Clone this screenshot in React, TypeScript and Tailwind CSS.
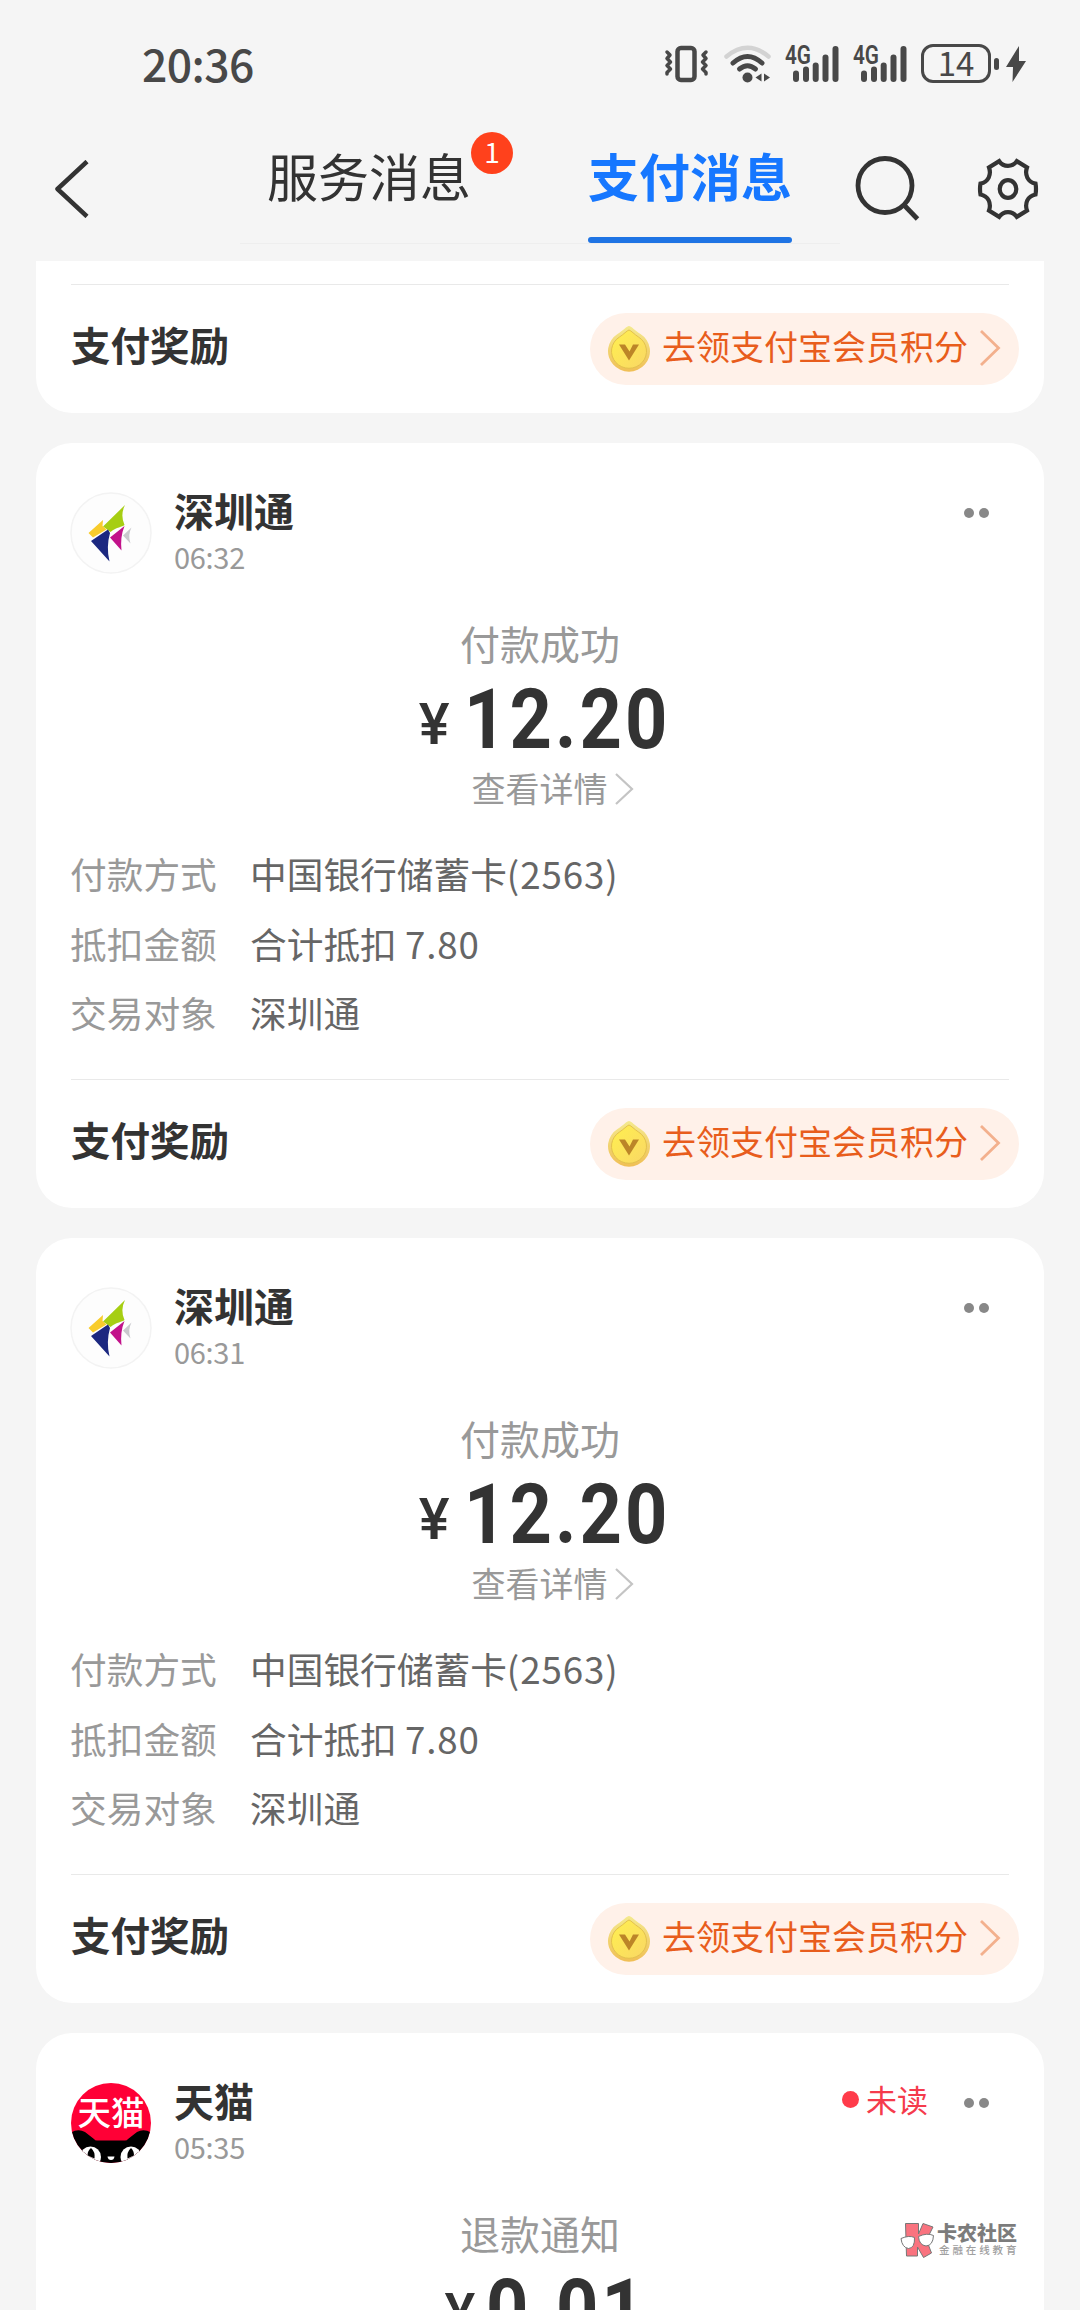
import type { ReactNode } from 'react'

type Row = { label: string; value: string }

type Message = {
  id: number
  name: string
  time: string
  title: string
  amount: string
  unread?: boolean
  avatar: ReactNode
  rows: Row[]
}

const payRows: Row[] = [
  { label: '付款方式', value: '中国银行储蓄卡(2563)' },
  { label: '抵扣金额', value: '合计抵扣 7.80' },
  { label: '交易对象', value: '深圳通' },
]

const messages: Message[] = [
  { id: 1, name: '深圳通', time: '06:32', title: '付款成功', amount: '12.20', avatar: <MetroAvatar />, rows: payRows },
  { id: 2, name: '深圳通', time: '06:31', title: '付款成功', amount: '12.20', avatar: <MetroAvatar />, rows: payRows },
  { id: 3, name: '天猫', time: '05:35', title: '退款通知', amount: '0.01', unread: true, avatar: <TmallAvatar />, rows: payRows },
]

function MetroAvatar() {
  return (
    <svg className="block h-[82px] w-[82px]" viewBox="0 0 82 82">
      <circle cx="41" cy="41" r="40" fill="#fdfdfd" stroke="#f3f3f3" strokeWidth="1.5" />
      <path d="M55 13 L33 34.500 L40.500 40 C47 35 52 35 54.500 33 Q50 23 55 13Z" fill="#a6ce12" />
      <path d="M33 28 L18.500 41 L23 45.500 L36.500 37.500 L32.500 34Z" fill="#f8cc2c" />
      <path d="M38 37.500 L21 49 L39.500 69.500 Q36 55 40 41Z" fill="#1c2880" />
      <path d="M54.500 34 L40 45.500 L51.500 58.500 Q50 45 54.500 34Z" fill="#c2128a" />
      <path d="M61.500 35.500 L53 43.500 L60.500 51.500 Q57.500 43 61.500 35.500Z" fill="#c9c9cd" />
    </svg>
  )
}

function TmallAvatar() {
  return (
    <svg className="block h-[82px] w-[82px]" viewBox="0 0 82 82">
      <clipPath id="tmall">
        <circle cx="41" cy="41" r="40" />
      </clipPath>
      <g clipPath="url(#tmall)">
        <rect width="82" height="82" fill="#ff0036" />
        <path d="M0 82 V51 Q8 46 15 50 L24 57 Q25 58.500 27 58.500 H55 Q57 58.500 58 57 L67 50 Q74 46 82 51 V82Z" fill="#000" />
        <ellipse cx="20.500" cy="75" rx="10.500" ry="10.500" fill="#fff" />
        <ellipse cx="61" cy="75" rx="10.500" ry="10.500" fill="#fff" />
        <path d="M21 66 Q25.500 70 24.500 76.500 L17.500 73.500 Q17.500 68.500 21 66Z" fill="#000" />
        <path d="M61 66 Q56.500 70 57.500 76.500 L64 73.500 Q64 68.500 61 66Z" fill="#000" />
        <path d="M37.500 74.500 H44.500 Q44 78 41 78 Q38 78 37.500 74.500Z" fill="#fff" />
      </g>
      <text x="41" y="43" textAnchor="middle" fontSize="33.500" fontWeight="500" fill="#fff" fontFamily="'Noto Sans CJK SC', sans-serif">
        天猫
      </text>
    </svg>
  )
}

function Signal() {
  return (
    <svg className="block h-[38px] w-[54px] overflow-visible" viewBox="0 0 54 38" fill="#484848">
      <text x="0" y="19" fontSize="25" fontWeight="600" textLength="26" lengthAdjust="spacingAndGlyphs" fontFamily="Roboto, sans-serif">
        4G
      </text>
      <rect x="8" y="25.500" width="6" height="11.500" rx="3" />
      <rect x="18" y="21.500" width="6" height="15.500" rx="3" />
      <rect x="27.700" y="17.500" width="6" height="19.500" rx="3" />
      <rect x="37.500" y="9.500" width="6" height="27.500" rx="3" />
      <rect x="47.500" y="1" width="6" height="36" rx="3" />
    </svg>
  )
}

function StatusBar() {
  return (
    <div className="flex h-[128px] items-start justify-between pl-[142px] pr-[54px] text-[#484848]">
      <span className="mt-[40px] text-[44.500px] leading-[45px] font-medium tracking-[-0.600px]">20:36</span>
      <div className="mt-[45px] flex items-start">
        <svg className="mr-[14px] block h-[38px] w-[46px]" viewBox="0 0 46 38" fill="none" stroke="#484848">
          <rect x="13.500" y="3" width="17" height="32" rx="3.500" strokeWidth="4.500" />
          <path d="M3 7 L6 10 L3 13.500 L6.500 17 L3 20.500 L6.500 24 L3 27.500 L3 29" strokeWidth="3.500" strokeLinejoin="round" strokeLinecap="round" />
          <path d="M42 7 L39 10 L42 13.500 L38.500 17 L42 20.500 L38.500 24 L42 27.500 L42 29" strokeWidth="3.500" strokeLinejoin="round" strokeLinecap="round" />
        </svg>
        <svg className="mr-[14px] block h-[38px] w-[47px]" viewBox="0 0 47 38" fill="none" strokeLinecap="round">
          <path d="M2.500 11.500 Q23.500 -6 44.500 11.500" stroke="#d3d3d3" strokeWidth="4.500" />
          <path d="M9 18 Q23.500 5 38 18" stroke="#484848" strokeWidth="5" />
          <path d="M15.500 24 Q23.500 17.500 31.500 24" stroke="#484848" strokeWidth="5" />
          <circle cx="23.500" cy="32.500" r="5" fill="#484848" />
          <path d="M37.500 28.500 V36.500 L31.500 32.500Z M40 28.500 V36.500 L46 32.500Z" fill="#484848" />
        </svg>
        <div className="mr-[14px]">
          <Signal />
        </div>
        <div className="mr-[14px]">
          <Signal />
        </div>
        <div className="-mt-px mr-[3px] flex h-[39px] w-[70px] items-center justify-center rounded-[12px] border-3 border-[#484848] pb-[3px] text-[33px] leading-[33px]">
          14
        </div>
        <div className="mt-[13px] mr-[7px] h-[12px] w-[5px] rounded-full bg-[#484848]" />
        <svg className="block h-[38px] w-[20px]" viewBox="0 0 20 38" fill="#484848">
          <path d="M13 1 L0 22 H7 L6.500 37 L20 16 H13Z" />
        </svg>
      </div>
    </div>
  )
}

function NavBar() {
  return (
    <div className="flex h-[133px] items-start pl-[54px]">
      <svg className="mt-[32px] block h-[58px] w-[36px]" viewBox="0 0 36 58" fill="none" stroke="#333" strokeWidth="4.500">
        <path d="M33 1.500 L3.500 29 L33 56.500" strokeLinejoin="round" />
      </svg>
      <div className="ml-[150px] flex h-[116px] w-[600px] border-b border-[#eeeeee]">
        <div className="flex w-[300px] justify-center">
          <span className="mt-[18px] text-[51px] leading-[58px] text-[#333]">服务消息</span>
          <span className="mt-[4px] h-[42px] w-[42px] rounded-full bg-[#ff411c] text-center text-[28px] leading-[38px] text-white">1</span>
        </div>
        <div className="flex w-[300px] flex-col items-center text-[#1677ff]">
          <span className="mt-[18px] text-[51px] leading-[58px] font-bold">支付消息</span>
          <span className="mt-[33px] h-[6px] w-[204px] rounded-full bg-[#1f74e4]" />
        </div>
      </div>
      <svg className="mt-[26px] ml-[14px] block h-[68px] w-[68px]" viewBox="0 0 68 68" fill="none" stroke="#333" strokeWidth="4.800">
        <circle cx="31" cy="31.500" r="27" />
        <path d="M50 51 L63.500 65" />
      </svg>
      <svg className="mt-[30px] ml-[54px] block h-[62px] w-[64px]" viewBox="0 0 64 62" fill="none" stroke="#333" strokeWidth="4.200" strokeLinejoin="miter">
        <ellipse cx="32" cy="31" rx="8.300" ry="8.800" />
        <path d="M23.200 3.200 C27.500 9.500 36.500 9.500 40.800 3.200 L51 9.500 C48.500 16.500 51.500 24 59.500 25.500 Q60.500 31 59.500 36.500 C51.500 38 48.500 45.500 51 52.500 L40.800 58.800 C36.500 52.500 27.500 52.500 23.200 58.800 L13 52.500 C15.500 45.500 12.500 38 4.500 36.500 Q3.500 31 4.500 25.500 C12.500 24 15.500 16.500 13 9.500Z" />
      </svg>
    </div>
  )
}

function CoinIcon() {
  return (
    <svg className="block h-[48px] w-[44px]" viewBox="0 0 44 48">
      <defs>
        <linearGradient id="coinRim" x1="0" y1="0" x2="0" y2="1">
          <stop offset="0" stopColor="#f4e98e" />
          <stop offset="1" stopColor="#f0bf55" />
        </linearGradient>
        <linearGradient id="coinFace" x1="0" y1="0" x2="1" y2="1">
          <stop offset="0" stopColor="#fff04f" />
          <stop offset="1" stopColor="#f9d765" />
        </linearGradient>
      </defs>
      <path d="M22 1 C24 1 28 5.500 33.500 9 A21 20.500 0 1 1 10.500 9 C16 5.500 20 1 22 1Z" fill="url(#coinRim)" />
      <path d="M22 5 C24 5.500 27.500 9.500 31.500 12 A17.500 17 0 1 1 12.500 12 C16.500 9.500 20 5.500 22 5Z" fill="url(#coinFace)" stroke="#e3c14c" strokeWidth="1" />
      <path d="M12 19.500 H18 L22.500 26.500 L26 19.500 H32 L22 35.500Z" fill="#bc8528" />
    </svg>
  )
}

function RewardRow() {
  return (
    <div className="px-[35px]">
      <div className="h-px bg-[#e9e9e9]" />
      <div className="-mr-[10px] flex h-[128px] items-center justify-between">
        <span className="mb-[11px] text-[39.500px] leading-[40px] font-bold text-[#333]">支付奖励</span>
        <div className="flex h-[72px] w-[429px] items-center rounded-full bg-[#fff1e9] pl-[17px]">
          <CoinIcon />
          <span className="mb-[7px] ml-[11px] text-[34px] leading-[40px] text-[#e85d1c]">去领支付宝会员积分</span>
          <svg className="mb-[2px] ml-[11px] block h-[38px] w-[22px]" viewBox="0 0 22 38" fill="none" stroke="#f3b08d" strokeWidth="2.800">
            <path d="M2 2 L19.500 19 L2 36" />
          </svg>
        </div>
      </div>
    </div>
  )
}

function MessageCard({ message }: { message: Message }) {
  return (
    <section className="mb-[30px] h-[765px] rounded-[36px] bg-white">
      <div className="flex h-[131px] items-start px-[34px] pt-[45px]">
        <div className="mt-[4px]">{message.avatar}</div>
        <div className="ml-[22px] flex-1">
          <div className="mt-[2px] text-[40px] leading-[40px] font-bold text-[#333]">{message.name}</div>
          <div className="mt-[9px] text-[29px] leading-[34px] tracking-[-0.300px] text-[#999]">{message.time}</div>
        </div>
        {message.unread && (
          <div className="mt-px mr-[36px] flex items-center text-[31px] leading-[40px] text-[#f53b4c]">
            <span className="mr-[7px] h-[17px] w-[17px] rounded-full bg-[#ff3b4a]" />
            未读
          </div>
        )}
        <div className="mt-[20px] mr-[21px] flex gap-[5px]">
          <span className="h-[10px] w-[10px] rounded-full bg-[#888]" />
          <span className="h-[10px] w-[10px] rounded-full bg-[#888]" />
        </div>
      </div>
      <div className="mt-[49px] text-center text-[40px] leading-[40px] text-[#999]">{message.title}</div>
      <div className="mt-[12px] flex h-[89px] items-baseline justify-center pl-[9px] font-['Roboto','Noto_Sans_CJK_SC',sans-serif] leading-[89px] text-[#333]">
        <span className="relative -top-1 text-[58px] font-medium">¥</span>
        <span className="-mr-[14px] scale-x-[0.88] text-[84px] font-bold tracking-[3.500px]">{message.amount}</span>
      </div>
      <div className="mt-[6px] flex items-center justify-center pl-[25px] text-[34px] leading-[34px] text-[#999]">
        查看详情
        <svg className="mt-[3px] ml-[7px] block h-[32px] w-[19px]" viewBox="0 0 19 32" fill="none" stroke="#c4c4c4" strokeWidth="2.200">
          <path d="M1 1 L17 16 L1 31" />
        </svg>
      </div>
      <div className="mt-[33px] px-[34px] text-[36.700px]">
        {message.rows.map((row) => (
          <div key={row.label} className="flex h-[69.700px] items-center leading-[40px]">
            <span className="w-[180px] text-[#999]">{row.label}</span>
            <span className="text-[#666]">
              {/* latin part runs slightly wider than the CJK part */}
              {row.value.split(/([\d.()]+)/).map((part, i) => (
                <span key={i} className={i % 2 ? 'tracking-[0.900px]' : ''}>
                  {part}
                </span>
              ))}
            </span>
          </div>
        ))}
      </div>
      <div className="mt-[32px]">
        <RewardRow />
      </div>
    </section>
  )
}

function Watermark() {
  return (
    <div className="absolute top-[2222px] left-[900px] flex items-start">
      <svg className="block h-[37px] w-[35px]" viewBox="0 0 35 37" stroke="#777" strokeWidth="1">
        <path d="M5.500 1.500 H18.500 V12 L23 1.500 L33 5 L26.500 18 L31.500 31 L23.500 35.500 L17.500 25 V34 H6.500Z" fill="#f9737f" />
        <path d="M1 16.500 Q9 13 14.500 15.500 Q15 26 8.500 26.500 Q2 25.500 1 16.500Z" fill="#fff" />
        <path d="M18.500 14.500 Q27 10.500 33.500 13.500 Q33 23.500 26 24 Q19 23 18.500 14.500Z" fill="#fff" />
      </svg>
      <div className="ml-[2px] whitespace-nowrap">
        <div className="text-[20px] leading-[21px] font-black text-[#7c7c7c]">卡农社区</div>
        <div className="ml-[2px] text-[10.500px] leading-[14px] font-medium tracking-[2.900px] text-[#a0a0a0]">金融在线教育</div>
      </div>
    </div>
  )
}

export default function App() {
  return (
    <div className="relative h-[2310px] w-[1080px] overflow-hidden bg-[#f5f5f5] font-['Noto_Sans_CJK_SC',sans-serif]">
      <StatusBar />
      <NavBar />
      <main className="px-[36px]">
        {/* tail of the message scrolled under the header */}
        <section className="mb-[30px] h-[152px] rounded-b-[36px] bg-white pt-[23px]">
          <RewardRow />
        </section>
        {messages.map((message) => (
          <MessageCard key={message.id} message={message} />
        ))}
      </main>
      <Watermark />
    </div>
  )
}
